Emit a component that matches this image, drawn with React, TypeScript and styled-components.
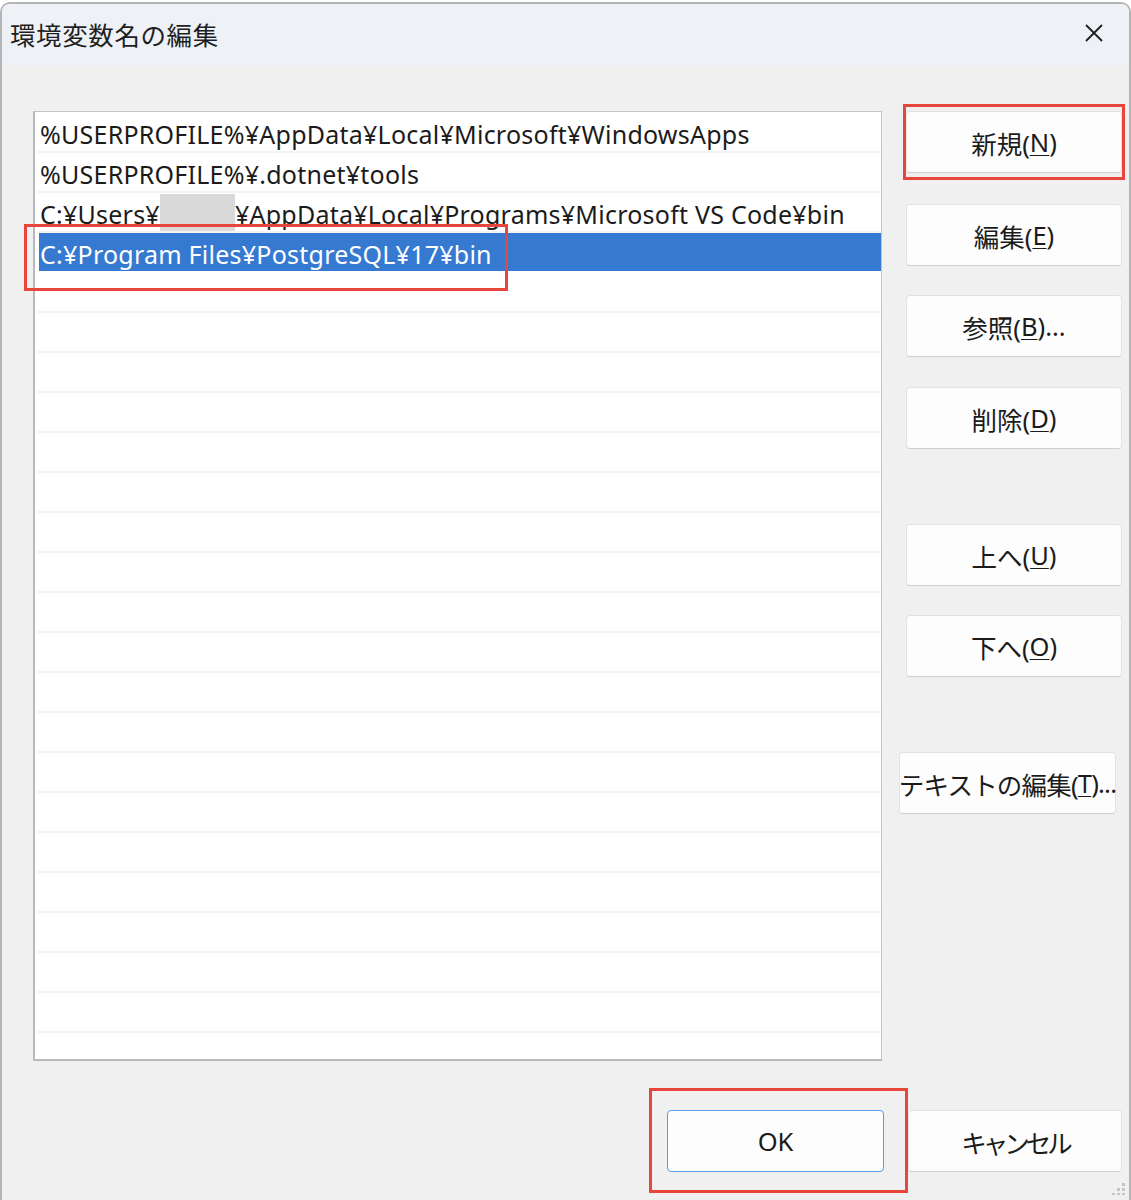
import React from "react";
import styled, { createGlobalStyle } from "styled-components";

const GlobalStyle = createGlobalStyle`
  html, body {
    margin: 0;
    padding: 0;
    background: #ffffff;
  }
  body {
    width: 1131px;
    height: 1200px;
    overflow: hidden;
    font-family: "Segoe UI", "Noto Sans", "Noto Sans CJK JP", sans-serif;
    color: #1b1b1b;
  }
`;

const FONT = `"Segoe UI", "Noto Sans", "Noto Sans CJK JP", sans-serif`;

const StyledWindow = styled.div`
  position: relative;
  box-sizing: border-box;
  width: 1131px;
  height: 1198px;
  margin-top: 2px;
  border: 2px solid #b4b4b4;
  border-bottom: none;
  border-radius: 10px 10px 0 0;
  overflow: hidden;
  background: #f0f0f0;
  display: flex;
  flex-direction: column;
`;

const StyledTitleBar = styled.div`
  box-sizing: border-box;
  height: 62px;
  background: #eef2f7;
  display: flex;
  align-items: center;
  justify-content: space-between;
  padding: 0 18px 4px 8px;
  flex-shrink: 0;
`;

const StyledTitle = styled.div`
  font-family: ${FONT};
  font-size: 25.5px;
  letter-spacing: 0.6px;
  color: #1f1f1f;
`;

const StyledClose = styled.div`
  width: 34px;
  height: 34px;
  display: flex;
  align-items: center;
  justify-content: center;
`;

const StyledMain = styled.div`
  display: flex;
  flex-direction: row;
  padding: 45px 0 0 31px;
`;

const StyledList = styled.div`
  box-sizing: border-box;
  width: 849px;
  height: 950px;
  background: #ffffff;
  border: 1px solid #c4c4c8;
  border-left: 2px solid #b8b8bd;
  border-bottom: 2px solid #b8b8bd;
  padding: 1px 0 0 1px;
  overflow: hidden;
  flex-shrink: 0;
`;

const StyledRow = styled.div<{ selected?: boolean }>`
  box-sizing: border-box;
  height: 40px;
  display: flex;
  align-items: center;
  padding: 3px 0 0 3px;
  margin-left: 1px;
  white-space: pre;
  font-family: ${FONT};
  font-size: 25px;
  letter-spacing: 0.24px;
  border-bottom: 2px solid ${(p) => (p.selected ? "#ffffff" : "#f3f3f3")};
  background: ${(p) => (p.selected ? "#3679d1" : "transparent")};
  color: ${(p) => (p.selected ? "#ffffff" : "#1b1b1b")};
  ${(p) => (p.selected ? "margin-left: 3px; padding-left: 1px;" : "")}
`;

const StyledRedacted = styled.span`
  display: inline-block;
  align-self: flex-end;
  width: 75px;
  height: 37px;
  background: #d9d9d9;
`;

const StyledHighlight = styled.div`
  position: relative;
`;

const StyledRedFrame = styled.div<{ t: number; r: number; b: number; l: number }>`
  position: absolute;
  top: ${(p) => p.t}px;
  right: ${(p) => p.r}px;
  bottom: ${(p) => p.b}px;
  left: ${(p) => p.l}px;
  border: 3px solid #e8463a;
  pointer-events: none;
`;

const StyledButtonColumn = styled.div`
  display: flex;
  flex-direction: column;
  margin-left: 24px;
`;

const StyledButton = styled.button<{
  gap?: number;
  shift?: number;
  primary?: boolean;
  w?: number;
  spacing?: number;
}>`
  box-sizing: border-box;
  width: ${(p) => p.w ?? 216}px;
  height: 62px;
  margin-top: ${(p) => p.gap ?? 0}px;
  margin-left: ${(p) => p.shift ?? 0}px;
  background: #fdfdfd;
  border: 1px solid ${(p) => (p.primary ? "#5a9be3" : "#e2e2e2")};
  border-bottom-color: ${(p) => (p.primary ? "#5a9be3" : "#cfcfcf")};
  border-radius: 4px;
  font-family: ${FONT};
  font-size: 25.5px;
  letter-spacing: ${(p) => p.spacing ?? 0}px;
  color: #1b1b1b;
  padding: 0;
  display: flex;
  align-items: center;
  justify-content: center;
  white-space: nowrap;

  u {
    text-decoration-thickness: 1px;
    text-underline-offset: 3px;
  }
`;

const StyledFooter = styled.div`
  display: flex;
  flex-direction: row;
  justify-content: flex-end;
  gap: 24px;
  padding: 49px 7px 0 0;
`;

const StyledGrip = styled.div`
  position: absolute;
  right: 3px;
  bottom: 0px;
`;

const rows = 24;

function RedFrame(props: { t: number; r: number; b: number; l: number }) {
  return <StyledRedFrame {...props} />;
}

export default function App() {
  const empty = Array.from({ length: rows - 4 });
  return (
    <>
      <GlobalStyle />
      <StyledWindow>
        <StyledTitleBar>
          <StyledTitle>環境変数名の編集</StyledTitle>
          <StyledClose>
            <svg width="20" height="20" viewBox="0 0 20 20">
              <path d="M2 2 L18 18 M18 2 L2 18" stroke="#1f1f1f" strokeWidth="1.8" fill="none" />
            </svg>
          </StyledClose>
        </StyledTitleBar>

        <StyledMain>
          <StyledHighlight>
            <StyledList>
              <StyledRow>%USERPROFILE%¥AppData¥Local¥Microsoft¥WindowsApps</StyledRow>
              <StyledRow>%USERPROFILE%¥.dotnet¥tools</StyledRow>
              <StyledRow>
                <span>C:¥Users¥</span>
                <StyledRedacted />
                <span>¥AppData¥Local¥Programs¥Microsoft VS Code¥bin</span>
              </StyledRow>
              <StyledRow selected>C:¥Program Files¥PostgreSQL¥17¥bin</StyledRow>
              {empty.map((_, i) => (
                <StyledRow key={i} />
              ))}
            </StyledList>
            <RedFrame t={113} l={-9} r={374} b={770} />
          </StyledHighlight>

          <StyledButtonColumn>
            <StyledHighlight>
              <StyledButton>
                新規(<u>N</u>)
              </StyledButton>
              <RedFrame t={-7} l={-3} r={-3} b={-7} />
            </StyledHighlight>
            <StyledButton gap={31}>
              編集(<u>E</u>)
            </StyledButton>
            <StyledButton gap={29}>
              参照(<u>B</u>)...
            </StyledButton>
            <StyledButton gap={30}>
              削除(<u>D</u>)
            </StyledButton>
            <StyledButton gap={75}>
              上へ(<u>U</u>)
            </StyledButton>
            <StyledButton gap={29}>
              下へ(<u>O</u>)
            </StyledButton>
            <StyledButton gap={75} shift={-7} w={217} spacing={-0.8}>
              テキストの編集(<u>T</u>)...
            </StyledButton>
          </StyledButtonColumn>
        </StyledMain>

        <StyledFooter>
          <StyledHighlight>
            <StyledButton primary w={217}>
              OK
            </StyledButton>
            <RedFrame t={-22} l={-18} r={-24} b={-21} />
          </StyledHighlight>
          <StyledButton w={214} spacing={-4}>
            キャンセル
          </StyledButton>
        </StyledFooter>

        <StyledGrip>
          <svg width="14" height="12" viewBox="0 0 14 12">
            <rect x="10" y="0" width="3" height="3" fill="#c4c4c4" />
            <rect x="5" y="5" width="3" height="3" fill="#c4c4c4" />
            <rect x="10" y="5" width="3" height="3" fill="#c4c4c4" />
            <rect x="0" y="10" width="3" height="3" fill="#c4c4c4" />
            <rect x="5" y="10" width="3" height="3" fill="#c4c4c4" />
            <rect x="10" y="10" width="3" height="3" fill="#c4c4c4" />
          </svg>
        </StyledGrip>
      </StyledWindow>
    </>
  );
}
